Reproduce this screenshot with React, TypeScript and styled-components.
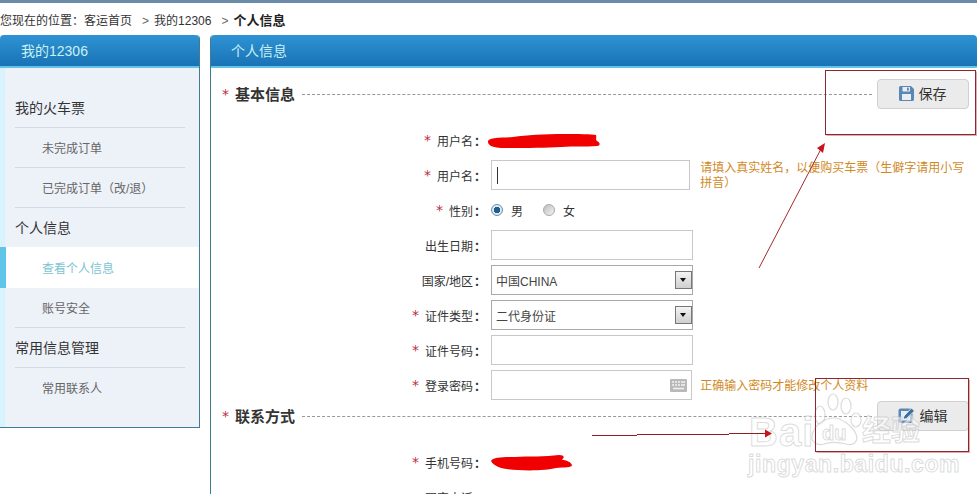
import styled, { createGlobalStyle } from "styled-components";

const Global = createGlobalStyle`
  html, body {
    margin: 0;
    padding: 0;
    background: #fff;
    overflow: hidden;
  }
  * {
    box-sizing: border-box;
  }
`;

const Page = styled.div`
  position: relative;
  width: 977px;
  height: 494px;
  overflow: hidden;
  background: #fff;
  color: #333;
  font-family: "Liberation Sans", "Noto Sans CJK SC", sans-serif;
  font-size: 12px;
`;

const TopBar = styled.div`
  height: 3px;
  background: #6a8ca8;
`;

const Crumbs = styled.div`
  height: 32px;
  line-height: 35px;
  white-space: nowrap;
  color: #333;

  b {
    font-size: 13px;
    color: #222;
  }
`;

const CrumbSep = styled.span`
  margin: 0 5px 0 10px;
  color: #666;
`;

const Columns = styled.div`
  display: flex;
  gap: 10px;
`;

const Sidebar = styled.aside`
  flex: 0 0 200px;
  height: 393px;
  display: flex;
  flex-direction: column;
  background: #edf1f8;
  border-right: 1px solid #3f7b96;
  border-bottom: 1px solid #3f7b96;
  border-top-right-radius: 4px;
`;

const PanelHead = styled.div`
  flex: 0 0 33px;
  height: 33px;
  padding-left: ${(p) => p.$indent}px;
  line-height: 33px;
  font-size: 14px;
  color: #c9f1f4;
  background: linear-gradient(#2f93d3, #1873b5);
  border-bottom: 2px solid #63c1ea;
  border-top-left-radius: 4px;
  border-top-right-radius: 4px;
`;

const Menu = styled.div`
  flex: 1;
  padding-top: 20px;
  border-left: 5px solid #d9f3fe;
`;

const GroupTitle = styled.div`
  height: 40px;
  margin: 0 14px 0 10px;
  line-height: 40px;
  font-size: 14px;
  color: #333;
  border-bottom: ${(p) => (p.$plain ? "none" : "1px solid #d5dae2")};
`;

const MenuItem = styled.div`
  height: 40px;
  margin: 0 14px 0 10px;
  padding-left: 27px;
  line-height: 42px;
  color: #666;
  border-bottom: ${(p) => (p.$plain ? "none" : "1px solid #d5dae2")};
`;

const ActiveItem = styled.div`
  height: 41px;
  margin: -1px 0 0 -5px;
  padding-left: 36px;
  line-height: 45px;
  color: #7cc4d2;
  background: #fff;
  border-left: 6px solid #5fc6ea;
`;

const Main = styled.main`
  flex: 1;
  min-width: 0;
  height: 470px;
  display: flex;
  flex-direction: column;
  border-left: 1px solid #3f7b96;
  border-top-left-radius: 4px;
`;

const Body = styled.div`
  padding: 11px 8px 0 0;
`;

const SectionHead = styled.div`
  display: flex;
  align-items: center;
  height: 30px;
  padding-left: 11px;
`;

const Star = styled.span`
  width: 8px;
  font-family: "DejaVu Sans", sans-serif;
  font-size: 14px;
  line-height: 1;
  color: #b92f3e;
`;

const SectionTitle = styled.h2`
  margin: -2px 7px 0 5px;
  font-size: 15px;
  font-weight: 700;
  color: #333;
`;

const Dashes = styled.div`
  flex: 1;
  margin-right: 5px;
  border-top: 1px dashed #999;
`;

const ActionButton = styled.button`
  flex: 0 0 92px;
  height: 30px;
  display: flex;
  align-items: center;
  justify-content: center;
  gap: 5px;
  padding: 0 1px 2px 0;
  font: inherit;
  font-size: 14px;
  color: #333;
  background: #ebebeb;
  border: 1px solid #d0d0d0;
  border-radius: 4px;
`;

const Form = styled.div`
  display: flex;
  flex-direction: column;
  gap: 5px;
  margin: 16px 0 1px;
`;

const Row = styled.div`
  display: flex;
  align-items: center;
  height: 30px;
`;

const Label = styled.label`
  flex: 0 0 280px;
  display: flex;
  justify-content: flex-end;
  align-items: center;
  gap: 5px;
  padding-right: 11px;
  color: #333;

  b {
    display: inline-block;
    width: 12px;
    margin: 0 -6px 0 1px;
    font-weight: 700;
  }
`;

const Input = styled.div`
  position: relative;
  width: ${(p) => p.$width}px;
  height: 30px;
  display: flex;
  align-items: center;
  padding-left: 4px;
  background: #fff;
  border: 1px solid ${(p) => (p.$dark ? "#a9a9a9" : "#c8c8c8")};
  color: #444;
`;

const Caret = styled.span`
  width: 1px;
  height: 17px;
  margin-left: 1px;
  background: #333;
`;

const SelectArrow = styled.span`
  position: absolute;
  right: 0;
  top: 5px;
  width: 17px;
  height: 18px;
  background: linear-gradient(#f4f4f4, #cfcfcf);
  border: 1px solid #777;

  &::after {
    content: "";
    position: absolute;
    left: 4px;
    top: 6px;
    border-top: 4px solid #111;
    border-left: 3.5px solid transparent;
    border-right: 3.5px solid transparent;
  }
`;

const KeyboardIcon = styled.svg`
  position: absolute;
  right: 4px;
  top: 8px;
`;

const Tip = styled.div`
  width: 270px;
  margin: 2px 0 0 ${(p) => p.$left}px;
  line-height: 15px;
  color: #cf8a1f;
`;

const RadioGroup = styled.div`
  display: flex;
  align-items: center;
`;

const Radio = styled.span`
  width: 12px;
  height: 12px;
  margin-left: ${(p) => (p.$first ? 0 : 20)}px;
  margin-right: 8px;
  border-radius: 50%;
  border: 1px solid ${(p) => (p.$on ? "#6d8ea8" : "#a8a8a8")};
  background: ${(p) =>
    p.$on
      ? "radial-gradient(circle, #1d5f8f 0 3px, #dfe9f0 3.5px)"
      : "linear-gradient(135deg, #bdbdbd, #f4f4f4)"};
`;

const RadioText = styled.span`
  color: #333;
`;

const Redaction = styled.svg`
  display: block;
  margin: ${(p) => p.$top || 0}px 0 0 ${(p) => p.$left || 0}px;
`;

const Overlay = styled.svg`
  position: absolute;
  left: 0;
  top: 0;
  pointer-events: none;
`;

const MarkBox = styled.div`
  position: absolute;
  left: ${(p) => p.$x}px;
  top: ${(p) => p.$y}px;
  width: ${(p) => p.$w}px;
  height: ${(p) => p.$h}px;
  border: 1px solid #8a2730;
  box-shadow: 0 0 1px 0.5px rgba(200, 90, 90, 0.5);
  pointer-events: none;
`;

const Watermark = styled.span`
  position: absolute;
  left: ${(p) => p.$x}px;
  top: ${(p) => p.$y}px;
  font-family: ${(p) => (p.$cjk ? '"Noto Sans CJK SC", sans-serif' : '"Liberation Sans", sans-serif')};
  font-size: ${(p) => p.$size}px;
  font-weight: 700;
  line-height: 1;
  letter-spacing: ${(p) => p.$track || 0}px;
  white-space: nowrap;
  color: rgba(255, 255, 255, 0.55);
  -webkit-text-stroke: 1px rgba(190, 190, 190, 0.55);
  pointer-events: none;
`;

// full-width punctuation, written as escapes so it survives editing
const COLON = "\uFF1A";
const COMMA = "\uFF0C";
const OPEN = "\uFF08";
const CLOSE = "\uFF09";

type FieldLabelProps = { text: string; required?: boolean };

const FieldLabel = ({ text, required }: FieldLabelProps) => (
  <Label>
    {required && <Star>*</Star>}
    <span>
      {text}
      <b>{COLON}</b>
    </span>
  </Label>
);

const FloppyIcon = () => (
  <svg width="15" height="15" viewBox="0 0 15 15">
    <path d="M0 1.5A1.5 1.5 0 0 1 1.5 0H12l3 3v10.5a1.5 1.5 0 0 1-1.5 1.5h-12A1.5 1.5 0 0 1 0 13.5z" fill="#5b87b5" />
    <rect x="3.5" y="1" width="7.5" height="4.5" fill="#e9eef4" />
    <rect x="8" y="1.6" width="1.8" height="3" fill="#5b87b5" />
    <rect x="3" y="8" width="9" height="6" fill="#e9eef4" />
  </svg>
);

const EditIcon = () => (
  <svg width="17" height="17" viewBox="0 0 17 17">
    <rect x="0.5" y="1.5" width="14" height="14.5" rx="2" fill="#5b87b5" />
    <rect x="3" y="4" width="9" height="9.5" fill="#e6edf4" />
    <path d="M5 12.5l1-3.5 7.5-8 3 3-8 7.5z" fill="#3f6f9f" stroke="#fff" strokeWidth="0.8" />
  </svg>
);

const KeyboardGlyph = () => (
  <KeyboardIcon width="17" height="13" viewBox="0 0 17 13">
    <rect width="17" height="13" rx="1" fill="#b9b9b9" />
    <path d="M2 3h2M5 3h2M8 3h2M11 3h4M2 6h2M5 6h2M8 6h2M11 6h4M3 9.5h11" stroke="#f2f2f2" strokeWidth="1.4" />
  </KeyboardIcon>
);

const App = () => {
  const menu = [
    { title: "我的火车票", items: ["未完成订单", `已完成订单${OPEN}改/退${CLOSE}`] },
    { title: "个人信息", items: ["查看个人信息", "账号安全"] },
    { title: "常用信息管理", items: ["常用联系人"] },
  ];

  return (
    <Page>
      <Global />
      <TopBar />
      <Crumbs>
        {`您现在的位置${COLON}客运首页`}
        <CrumbSep>&gt;</CrumbSep>
        我的12306
        <CrumbSep>&gt;</CrumbSep>
        <b>个人信息</b>
      </Crumbs>
      <Columns>
        <Sidebar>
          <PanelHead $indent={21}>我的12306</PanelHead>
          <Menu>
            {menu.map((group) => (
              <div key={group.title}>
                <GroupTitle $plain={group.title === "个人信息"}>{group.title}</GroupTitle>
                {group.items.map((item) =>
                  item === "查看个人信息" ? (
                    <ActiveItem key={item}>{item}</ActiveItem>
                  ) : (
                    <MenuItem key={item} $plain={item === "常用联系人"}>
                      {item}
                    </MenuItem>
                  )
                )}
              </div>
            ))}
          </Menu>
        </Sidebar>
        <Main>
          <PanelHead $indent={20}>个人信息</PanelHead>
          <Body>
            <SectionHead>
              <Star>*</Star>
              <SectionTitle>基本信息</SectionTitle>
              <Dashes />
              <ActionButton>
                <FloppyIcon />
                保存
              </ActionButton>
            </SectionHead>
            <Form>
              <Row>
                <FieldLabel text="用户名" required />
                <Redaction $left={-4} $top={1} width="114" height="16" viewBox="0 0 114 16">
                  <path
                    d="M1 8C3 4 14 5 26 4c14-2 30-3 52-3 12 0 27 0 31 1 1 3-1 4 1 6 4 2 3 5 0 5-12 1-22 0-36 1-16 1-38 1-60 1C8 15 0 13 1 8z"
                    fill="#f00000"
                  />
                </Redaction>
              </Row>
              <Row>
                <FieldLabel text="用户名" required />
                <Input $width={200}>
                  <Caret />
                </Input>
                <Tip $left={10}>{`请填入真实姓名${COMMA}以便购买车票${OPEN}生僻字请用小写拼音${CLOSE}`}</Tip>
              </Row>
              <Row>
                <FieldLabel text="性别" required />
                <RadioGroup>
                  <Radio $on $first />
                  <RadioText>男</RadioText>
                  <Radio />
                  <RadioText>女</RadioText>
                </RadioGroup>
              </Row>
              <Row>
                <FieldLabel text="出生日期" />
                <Input $width={202} />
              </Row>
              <Row>
                <FieldLabel text="国家/地区" />
                <Input $width={202} $dark>
                  中国CHINA
                  <SelectArrow />
                </Input>
              </Row>
              <Row>
                <FieldLabel text="证件类型" required />
                <Input $width={202} $dark>
                  二代身份证
                  <SelectArrow />
                </Input>
              </Row>
              <Row>
                <FieldLabel text="证件号码" required />
                <Input $width={202} />
              </Row>
              <Row>
                <FieldLabel text="登录密码" required />
                <Input $width={202}>
                  <KeyboardGlyph />
                </Input>
                <Tip $left={8}>正确输入密码才能修改个人资料</Tip>
              </Row>
            </Form>
            <SectionHead>
              <Star>*</Star>
              <SectionTitle>联系方式</SectionTitle>
              <Dashes />
              <ActionButton>
                <EditIcon />
                编辑
              </ActionButton>
            </SectionHead>
            <Form>
              <Row>
                <FieldLabel text="手机号码" required />
                <Redaction $top={1} width="82" height="17" viewBox="0 0 82 17">
                  <path
                    d="M0 7C2 3 12 3 24 3c14-1 30 0 44-2 5 0 6 2 3 5 4 0 9 2 10 5 0 3-8 2-16 3-8 2-24 3-38 2C14 16 3 13 0 7z"
                    fill="#f00000"
                  />
                </Redaction>
              </Row>
              <Row>
                <FieldLabel text="固定电话" />
              </Row>
            </Form>
          </Body>
        </Main>
      </Columns>

      <Watermark $x={749} $y={412} $size={40} $track={1}>
        Bai
      </Watermark>
      <Overlay width="977" height="494" viewBox="0 0 977 494">
        <g fill="rgba(255,255,255,0.5)" stroke="rgba(190,190,190,0.55)" strokeWidth="1.2">
          <ellipse cx="820" cy="415" rx="5" ry="9" />
          <ellipse cx="833" cy="402" rx="5" ry="8" />
          <ellipse cx="846" cy="406" rx="5" ry="8" />
          <ellipse cx="856" cy="420" rx="5" ry="7" />
          <path d="M812 436c2-12 14-18 22-18s18 8 22 16c3 8-3 12-10 10-8-2-16-2-22 0-7 2-13-2-12-8z" />
        </g>
        <path d="M759 268L821 149" stroke="#a52a2a" strokeWidth="1" fill="none" />
        <path d="M825 143l-8 5 6 5z" fill="#c8141e" />
        <path d="M592 435.500h45M637 434.500h92M729 433.500h36" stroke="#8e1f24" strokeWidth="1" fill="none" />
        <path d="M772 433.500l-7-4v8z" fill="#c8141e" />
      </Overlay>
      <Watermark $x={822} $y={423} $size={20}>
        du
      </Watermark>
      <Watermark $x={862} $y={414} $size={29} $cjk>
        经验
      </Watermark>
      <Watermark $x={748} $y={453} $size={23} $track={0.6}>
        jingyan.baidu.com
      </Watermark>
      <MarkBox $x={825} $y={70} $w={151} $h={65} />
      <MarkBox $x={815} $y={378} $w={154} $h={74} />
    </Page>
  );
};

export default App;
